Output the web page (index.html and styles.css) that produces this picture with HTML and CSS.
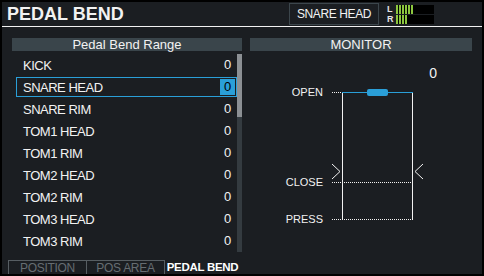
FILE: index.html
```html
<!DOCTYPE html>
<html>
<head>
	<title>Pedal Bend</title>
	<link rel="stylesheet" href="styles.css">
</head>
<body>
<div class="screen">

	<div class="titlebar">
		<h1>PEDAL BEND</h1>
		<div class="part">SNARE HEAD</div>
		<div class="meter">
			<div class="ch"><span class="lr">L</span><span class="bars"><i></i><i></i><i></i><i></i><i></i><i></i></span></div>
			<div class="ch"><span class="lr">R</span><span class="bars"><i></i><i></i><i></i><i></i></span></div>
		</div>
	</div>

	<div class="main">
		<div class="panel range">
			<h2>Pedal Bend Range</h2>
			<div class="listwrap">
				<ol class="list">
					<li><span class="name">KICK</span><span class="val">0</span></li>
					<li class="sel"><span class="name">SNARE HEAD</span><span class="val">0</span></li>
					<li><span class="name">SNARE RIM</span><span class="val">0</span></li>
					<li><span class="name">TOM1 HEAD</span><span class="val">0</span></li>
					<li><span class="name">TOM1 RIM</span><span class="val">0</span></li>
					<li><span class="name">TOM2 HEAD</span><span class="val">0</span></li>
					<li><span class="name">TOM2 RIM</span><span class="val">0</span></li>
					<li><span class="name">TOM3 HEAD</span><span class="val">0</span></li>
					<li><span class="name">TOM3 RIM</span><span class="val">0</span></li>
				</ol>
				<div class="scroll"><div class="thumb"></div></div>
			</div>
		</div>

		<div class="panel monitor">
			<h2>MONITOR</h2>
			<svg class="diagram" width="222" height="190" viewBox="0 0 222 190">
				<text class="num" x="187" y="26" text-anchor="end">0</text>

				<text class="lbl" x="73" y="44" text-anchor="end">OPEN</text>
				<line class="dot" x1="82" y1="40.5" x2="92" y2="40.5"/>
				<line class="wire" x1="92.5" y1="40" x2="92.5" y2="168"/>
				<line class="wire" x1="162.5" y1="40" x2="162.5" y2="168"/>
				<line class="blue" x1="92" y1="40.5" x2="163" y2="40.5"/>
				<rect class="knob" x="117" y="37" width="21" height="7" rx="2"/>

				<polyline class="chev" points="82,112 90,119.5 82,127"/>
				<polyline class="chev" points="173,112 165,119.5 173,127"/>

				<text class="lbl" x="73" y="134" text-anchor="end">CLOSE</text>
				<line class="dot" x1="82" y1="130.5" x2="162" y2="130.5"/>

				<text class="lbl" x="73" y="171" text-anchor="end">PRESS</text>
				<line class="dot" x1="82" y1="167.5" x2="162" y2="167.5"/>
			</svg>
		</div>
	</div>

	<div class="tabs">
		<div class="tab">POSITION</div>
		<div class="tab">POS AREA</div>
		<div class="tab on">PEDAL BEND</div>
	</div>

</div>
</body>
</html>
```

FILE: styles.css
```css
/* Reset */

* { margin: 0; padding: 0; box-sizing: border-box; }

html, body {
	width: 484px;
	height: 276px;
	background-color: #000;
	overflow: hidden;
}


/* Screen */

.screen {
	width: 484px;
	height: 276px;
	border: solid 2px #000;
	background-color: #1b1e22;
	color: #f2f2f2;
	font-family: "Liberation Sans", Arial, sans-serif;
	display: flex;
	flex-direction: column;
}


/* Title bar */

.titlebar {
	height: 25px;
	border-bottom: solid 1px #f2f2f2;
	display: flex;
	align-items: flex-start;
	padding-left: 5px;
}

.titlebar h1 {
	font-family: "Liberation Sans Narrow", "Liberation Sans", sans-serif;
	font-size: 18px;
	font-weight: bold;
	line-height: 18px;
	margin-top: 3px;
	flex: 1;
}

.part {
	width: 90px;
	height: 22px;
	margin-top: 1px;
	border: solid 1px #3c464c;
	font-size: 12px;
	letter-spacing: -0.4px;
	line-height: 20px;
	text-align: center;
}

.meter {
	margin: 2px 48px 0 8px;
}

.ch {
	display: flex;
	align-items: center;
	height: 10px;
}

.lr {
	width: 9px;
	font-size: 9px;
	font-weight: bold;
	color: #e6e6e6;
}

.bars {
	display: flex;
	width: 38px;
	height: 9px;
	background-color: #000;
}

.bars i {
	width: 2px;
	height: 9px;
	margin-right: 1px;
	background-color: #8cc63f;
}


/* Panels */

.main {
	flex: 1;
	display: flex;
	gap: 8px;
	padding: 11px 10px 0 10px;
}

.panel h2 {
	height: 13px;
	background-color: #3a454b;
	font-size: 13px;
	font-weight: normal;
	line-height: 13px;
	text-align: center;
}

.range {
	width: 230px;
}

.monitor {
	width: 222px;
}


/* Range list */

.listwrap {
	display: flex;
	padding-top: 3px;
}

.list {
	list-style: none;
	width: 225px;
	padding-left: 4px;
	padding-top: 1px;
}

.list li {
	display: flex;
	align-items: center;
	height: 20px;
	margin-bottom: 2px;
	padding: 0 1px 0 6px;
	border: solid 1px transparent;
	font-size: 13px;
	letter-spacing: -0.5px;
}

.list .name {
	flex: 1;
}

.list .val {
	width: 15px;
	height: 16px;
	line-height: 16px;
	text-align: center;
	letter-spacing: 0;
}

.list .sel {
	border-color: #2a9fd8;
}

.list .sel .val {
	background-color: #2a9fd8;
	color: #000;
}

.scroll {
	width: 5px;
	height: 198px;
	background-color: #343b40;
}

.thumb {
	height: 63px;
	background-color: #8c9094;
}


/* Monitor diagram */

.diagram {
	display: block;
	margin-top: 1px;
}

.diagram text {
	fill: #f2f2f2;
	font-family: "Liberation Sans", Arial, sans-serif;
}

.diagram .num {
	font-size: 14px;
}

.diagram .lbl {
	font-size: 11px;
}

.diagram .dot {
	stroke: #f2f2f2;
	stroke-width: 1;
	stroke-dasharray: 1 1;
}

.diagram .wire {
	stroke: #f2f2f2;
	stroke-width: 1;
}

.diagram .blue {
	stroke: #2a9fd8;
	stroke-width: 1;
}

.diagram .knob {
	fill: #2a9fd8;
}

.diagram .chev {
	fill: none;
	stroke: #f2f2f2;
	stroke-width: 1;
}


/* Tabs */

.tabs {
	display: flex;
	height: 14px;
	margin-left: 6px;
}

.tab {
	border: solid 1px #575e63;
	border-bottom: none;
	color: #666d72;
	font-size: 12px;
	letter-spacing: -0.3px;
	line-height: 14px;
	text-align: center;
	width: 79px;
}

.tab + .tab {
	border-left: none;
	width: 78px;
}

.tab.on {
	border: none;
	color: #fff;
	font-family: "Liberation Sans Narrow", "Liberation Sans", sans-serif;
	font-size: 11.5px;
	font-weight: bold;
	letter-spacing: -0.3px;
	width: 75px;
	line-height: 14px;
}
```
